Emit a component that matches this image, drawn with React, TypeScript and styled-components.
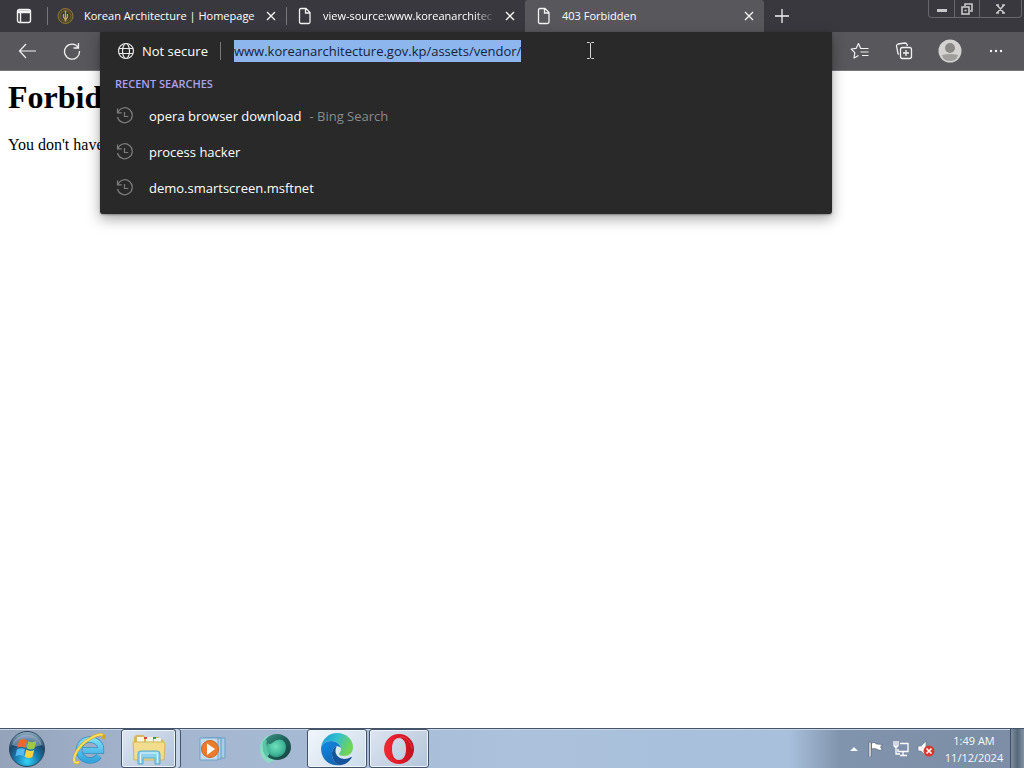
import React from "react";
import styled, { createGlobalStyle } from "styled-components";

const GlobalStyle = createGlobalStyle`
  * { box-sizing: border-box; }
  body { margin: 0; background: #fff; }
  button { border: 0; padding: 0; background: none; color: inherit; font: inherit; }
  svg { display: block; flex: none; }
`;

const Desktop = styled.div`
  min-height: 100vh;
  display: flex;
  flex-direction: column;
  font-family: "Open Sans", "Noto Sans", sans-serif;
  color: #fff;
  overflow: hidden;
`;

const TabStrip = styled.header`
  display: flex;
  height: 32px;
  background: #39383e;
`;

const StripButton = styled.button<{ $width: number }>`
  width: ${(p) => p.$width}px;
  flex: none;
  display: flex;
  align-items: center;
  justify-content: center;
`;

const Tab = styled.div<{ $active?: boolean }>`
  flex: 0 1 239px;
  min-width: 0;
  display: flex;
  align-items: center;
  gap: 8px;
  padding: 0 8px 0 9px;
  position: relative;
  background: ${(p) => (p.$active ? "#58585c" : "transparent")};
  border-radius: 3px 3px 0 0;
  &::before {
    content: "";
    position: absolute;
    left: 0;
    top: 7px;
    height: 18px;
    width: 1px;
    background: ${(p) => (p.$active ? "transparent" : "#77767b")};
  }
`;

const TabTitle = styled.span<{ $fade?: boolean }>`
  flex: 1;
  min-width: 0;
  overflow: hidden;
  white-space: nowrap;
  font-size: 11px;
  line-height: 20px;
  mask-image: ${(p) => (p.$fade ? "linear-gradient(90deg, #000 88%, transparent)" : "none")};
`;

const TabClose = styled.button`
  width: 14px;
  height: 16px;
  display: flex;
  align-items: center;
  justify-content: center;
`;

const WindowControls = styled.div`
  margin-left: auto;
  margin-right: 2px;
  display: flex;
  height: 18px;
  border: 1px solid #67666b;
  border-top: 0;
  border-radius: 0 0 4px 4px;
`;

const WindowButton = styled.button<{ $width: number }>`
  width: ${(p) => p.$width}px;
  display: flex;
  align-items: center;
  justify-content: center;
  & + & { border-left: 1px solid #67666b; }
`;

const Toolbar = styled.div`
  display: flex;
  height: 38px;
  background: #58585c;
`;

const ToolGroup = styled.div<{ $width: number }>`
  flex: none;
  width: ${(p) => p.$width}px;
  display: flex;
  align-items: center;
  justify-content: space-between;
  padding: 0 19px 0 18px;
`;

const ToolButton = styled.button`
  display: flex;
  align-items: center;
  justify-content: center;
`;

const AddressSlot = styled.div`
  flex: 1;
  min-width: 0;
  position: relative;
`;

const Popup = styled.div`
  position: absolute;
  top: 0;
  left: 0;
  right: 0;
  z-index: 2;
  padding-bottom: 8px;
  background: #292929;
  border-radius: 0 0 3px 3px;
  box-shadow: 0 5px 14px rgba(0, 0, 0, 0.35), 0 1px 2px rgba(0, 0, 0, 0.3);
`;

const AddressRow = styled.div`
  display: flex;
  align-items: center;
  height: 38px;
  padding-left: 17px;
  font-size: 13px;
`;

const Security = styled.button`
  display: flex;
  align-items: center;
  gap: 7px;
  flex: none;
  padding-right: 12px;
  border-right: 1px solid #77777a;
  line-height: 16px;
  margin-right: 13px;
`;

const UrlInput = styled.input`
  field-sizing: content;
  min-width: 0;
  height: 22px;
  border: 0;
  padding: 0;
  outline: 0;
  font: inherit;
  color: #14233c;
  background: #8eb6ee;
`;

const PointerMark = styled.div`
  position: absolute;
  top: 10px;
  left: 486px;
`;

const SectionTitle = styled.h2`
  margin: 0;
  padding: 0 15px;
  font-size: 11px;
  font-weight: 600;
  line-height: 28px;
  color: #a9a1f2;
`;

const Searches = styled.ul`
  margin: 0;
  padding: 0;
  list-style: none;
`;

const SearchLink = styled.a`
  display: flex;
  align-items: center;
  height: 36px;
  padding-left: 16px;
  color: #fff;
  text-decoration: none;
  font-size: 13px;
  white-space: pre;
`;

const SearchText = styled.span`
  margin-left: 15px;
`;

const SearchSource = styled.span`
  margin-left: 8px;
  color: #8b8b8b;
`;

const Page = styled.main`
  flex: 1;
  padding: 8px;
  border-top: 1px solid #77777a;
  color: #000;
  background: #fff;
  font-family: "Liberation Serif", serif;
  font-size: 16px;
  line-height: 18px;
  h1 {
    margin: 0 0 21px;
    font-size: 32px;
    line-height: 36px;
  }
  p { margin: 0; }
`;

const Taskbar = styled.footer`
  display: flex;
  height: 40px;
  border-top: 1px solid #46546a;
  box-shadow: inset 0 1px 0 #c9d6e6;
  background: linear-gradient(90deg, #94a3b9 0, #a3b4ce 14%, #abc1dc 50%, #a8c0dc 77%, #8194ad 82%, #7c8da5 100%);
`;

const Launchers = styled.nav`
  display: flex;
  gap: 2px;
`;

const Launcher = styled.button<{ $state?: "open" | "focused"; $stacked?: boolean }>`
  width: ${(p) => (p.$stacked ? 55 : 60)}px;
  margin-right: ${(p) => (p.$stacked ? 5 : 0)}px;
  display: flex;
  align-items: center;
  justify-content: center;
  border-radius: 3px;
  border: 1px solid ${(p) => (p.$state ? "#43536b" : "transparent")};
  box-shadow: ${(p) =>
    p.$stacked
      ? "inset 0 0 0 1px #eef4fb, 4px 0 0 #c6d3e4, 5px 0 0 #43536b"
      : p.$state
      ? "inset 0 0 0 1px #eef4fb"
      : "none"};
  background: ${(p) =>
    p.$state === "focused"
      ? "linear-gradient(135deg, #f1f6fb, #cbdbeb)"
      : p.$state === "open"
      ? "linear-gradient(135deg, #dde5f0, #b3c4da)"
      : "none"};
`;

const StartButton = styled.button`
  width: 59px;
  display: flex;
  align-items: center;
  padding-left: 7px;
`;

const Tray = styled.div`
  margin-left: auto;
  display: flex;
  align-items: center;
  gap: 8px;
`;

const Clock = styled.time`
  width: 62px;
  text-align: center;
  font-size: 11px;
  line-height: 17px;
  white-space: nowrap;
  color: #f4f8fc;
`;

const ShowDesktop = styled.button`
  width: 14px;
  height: 39px;
  margin-left: -3px;
  border-left: 1px solid #3f4d60;
  background: linear-gradient(90deg, #7f8e9f, #56677a 50%, #8494a6);
`;

const CloseGlyph = () => (
  <svg width="10" height="10" viewBox="0 0 10 10" stroke="#f2f2f2" strokeWidth="1.4">
    <path d="M1 1l8 8M9 1l-8 8" />
  </svg>
);

const PageGlyph = () => (
  <svg width="20" height="18" viewBox="0 0 20 18" fill="none" stroke="#f2f2f2" strokeWidth="1.3">
    <path d="M4.500 3q0-1.500 1.500-1.500h5l4 4v9.500q0 1.500-1.500 1.500H6q-1.500 0-1.500-1.500z M10.500 1.500v4.500h4.500" />
  </svg>
);

const EmblemGlyph = () => (
  <svg width="20" height="18" viewBox="0 0 20 18">
    <circle cx="9.500" cy="9" r="7.500" fill="#4f482c" stroke="#8d7b42" />
    <circle cx="9.500" cy="9" r="5" fill="#36362f" stroke="#6e6238" />
    <path d="M9.500 3.500v11M7.500 7v3l2 3 2-3V7" stroke="#c3aa58" strokeWidth="1.300" fill="none" />
  </svg>
);

const HistoryGlyph = () => (
  <svg width="18" height="18" viewBox="0 0 18 18" fill="none" stroke="#7c7c7c" strokeWidth="1.2">
    <path d="M1.500 1.500v4.300h4.300M1.800 5.500A7.500 7.500 0 1 1 1.500 10M8.500 5v4.500h3.800" />
  </svg>
);

const StartOrb = () => (
  <svg width="40" height="38" viewBox="0 0 40 38">
    <defs>
      <radialGradient id="orb" cx=".5" cy=".85" r=".85">
        <stop offset="0" stopColor="#35d4f6" />
        <stop offset=".4" stopColor="#1878ad" />
        <stop offset=".7" stopColor="#1c4668" />
        <stop offset="1" stopColor="#9eb9cf" />
      </radialGradient>
    </defs>
    <circle cx="20" cy="19" r="17.500" fill="url(#orb)" stroke="#29455f" />
    <path d="M5 15a15.500 14 0 0 1 30 0Q20 20 5 15" fill="#d9e8f1" opacity=".38" />
    <path d="M12 10.500q4-2.400 8 0l-1.600 7.200q-4-2-8 0z" fill="#ef672d" />
    <path d="M21.300 11.200q4 2 8-.2l-1.800 7.500q-4 2-7.800-.2z" fill="#9bcb45" />
    <path d="M10 19.300q4-2.200 8 0l-1.700 7q-4-2-7.900.2z" fill="#55b8f1" />
    <path d="M19.300 19.800q4 2.200 7.900.2l-1.800 7q-4 2-7.800-.2z" fill="#ffd23e" />
  </svg>
);

const ExplorerE = () => (
  <svg width="36" height="34" viewBox="0 0 36 34" fill="none">
    <defs>
      <linearGradient id="ieBlue" x2="0" y2="1">
        <stop stopColor="#7fdcfb" />
        <stop offset="1" stopColor="#35a5dd" />
      </linearGradient>
    </defs>
    <path d="M12 18.500h18A11 10.500 0 1 0 28 24" stroke="#2f8fc4" strokeWidth="6.500" />
    <path d="M12 18.500h18A11 10.500 0 1 0 28 24" stroke="url(#ieBlue)" strokeWidth="5" />
    <path d="M8 30Q1 33 4 23 8 13 20 6q9-5 12-3 2 1 0 4" stroke="#d6a31c" strokeWidth="3" />
    <path d="M8 30Q1 33 4 23 8 13 20 6q9-5 12-3" stroke="#ffe15c" strokeWidth="2" />
  </svg>
);

const FolderGlyph = () => (
  <svg width="36" height="32" viewBox="0 0 36 32">
    <path d="M3 4l2-2h8l1 2h13l5 3v20H3z" fill="#d7b860" />
    <path d="M6 4h7v5H6zM15 4h7v5h-7zM23 5h7v5h-7z" fill="#f8f5de" />
    <path d="M13 4h3v2h-3z" fill="#db463a" />
    <path d="M22 4h3v2h-3z" fill="#39995a" />
    <path d="M2 9h31l1 3-1 15H3z" fill="#f2dc8d" stroke="#d1b560" />
    <path d="M7 31V21q0-3 3-3h16q3 0 3 3v10h-5v-6H12v6z" fill="#8fd2ee" stroke="#5babc8" />
    <path d="M9 20h18M9.500 21v9M26.500 21v9" stroke="#dcf8ff" />
  </svg>
);

const MediaGlyph = () => (
  <svg width="30" height="30" viewBox="0 0 30 30">
    <path d="M9 4h18v20H9z" fill="#a9cde3" stroke="#6b9fc6" />
    <path d="M5 4h18v21H5z" fill="#b4d3e7" stroke="#5f9bc8" />
    <path d="M2 4h18v22H2z" fill="#c2dced" stroke="#6ba3cb" />
    <circle cx="12" cy="15" r="8.500" fill="#ea7d2b" stroke="#cf6424" />
    <path d="M9 9.500l8 5.500-8 6z" fill="#fff" />
  </svg>
);

const GreenSphere = () => (
  <svg width="34" height="34" viewBox="0 0 34 34">
    <defs>
      <radialGradient id="sphere" cx=".45" cy=".4" r=".65">
        <stop stopColor="#6fe0ba" />
        <stop offset=".7" stopColor="#3fb597" />
        <stop offset="1" stopColor="#2d8b78" />
      </radialGradient>
      <linearGradient id="shade" x2="1" y2="1">
        <stop stopColor="#3c9c88" />
        <stop offset=".5" stopColor="#1e5f58" />
        <stop offset="1" stopColor="#15413f" />
      </linearGradient>
    </defs>
    <path d="M10 3Q2 8 2 17t8 14q5-1 10-5L12 13z" fill="#8cdcc4" />
    <ellipse cx="19" cy="15" rx="14" ry="13" fill="url(#shade)" />
    <path d="M5 9Q3 18 9 26q3-4 3-8-5-4-3-10z" fill="#5bc4a5" />
    <path d="M10 11q2 2 4 0 5-5 10-3 4 2 4 7 0 8-8 10-7 1-10-5-2-5 0-9z" fill="url(#sphere)" />
  </svg>
);

const EdgeGlyph = () => (
  <svg width="34" height="34" viewBox="0 0 34 34">
    <defs>
      <linearGradient id="edgeTop" x2="1" y2=".4">
        <stop stopColor="#1493d8" />
        <stop offset=".5" stopColor="#32c0d0" />
        <stop offset="1" stopColor="#71d455" />
      </linearGradient>
      <linearGradient id="edgeLow" x2=".6" y2="1">
        <stop stopColor="#128be0" />
        <stop offset="1" stopColor="#1464b4" />
      </linearGradient>
    </defs>
    <path d="M1 16C2 7 9 1 17 1c10 0 16 7 16 14 0 6-4 9-9 9-3 0-5-1-5-2s2-2 2-5c0-4-4-8-10-8C6 9 2 12 1 16z" fill="url(#edgeTop)" />
    <path d="M1 16c1-4 5-7 10-7 5 0 9 3 10 7-1-1-3-2-4-2-3 1-5 4-5 8 0 6 4 11 10 11C10 35 1 28 1 16z" fill="url(#edgeLow)" />
    <path d="M12 22c0-4 2-7 5-8-3 4-2 12 7 13 3 0 5-1 7-2 1 0 1 0 .5 1C29 30 25 33 20 33c-5-1-8-6-8-11z" fill="#15539a" />
  </svg>
);

const OperaGlyph = () => (
  <svg width="32" height="32" viewBox="0 0 32 32">
    <defs>
      <linearGradient id="operaRed" x2="1">
        <stop stopColor="#f02b34" />
        <stop offset=".6" stopColor="#dc1725" />
        <stop offset="1" stopColor="#b81523" />
      </linearGradient>
    </defs>
    <path fillRule="evenodd" fill="url(#operaRed)" d="M16 1a15 15 0 1 0 0 30 15 15 0 1 0 0-30zm0 4c5 0 7 5 7 11s-2 11-7 11-7-5-7-11 2-11 7-11z" />
    <path d="M16 5q5-3 9 2 4 4 4 9" fill="none" stroke="#ff6265" opacity=".5" />
  </svg>
);

const searches = [
  { text: "opera browser download", source: "Bing Search" },
  { text: "process hacker" },
  { text: "demo.smartscreen.msftnet" },
];

export default function App() {
  return (
    <Desktop>
      <GlobalStyle />
      <TabStrip>
        <StripButton $width={47} aria-label="Tab actions">
          <svg width="16" height="16" viewBox="0 0 16 16" fill="none" stroke="#f2f2f2" strokeWidth="1.4">
            <rect x="1.500" y="1.500" width="13" height="13" rx="2" />
            <path d="M1.500 3h13M1.500 4.500h13M4.500 5v9" />
          </svg>
        </StripButton>
        <Tab>
          <EmblemGlyph />
          <TabTitle>Korean Architecture | Homepage</TabTitle>
          <TabClose aria-label="Close tab"><CloseGlyph /></TabClose>
        </Tab>
        <Tab>
          <PageGlyph />
          <TabTitle $fade>view-source:www.koreanarchitec</TabTitle>
          <TabClose aria-label="Close tab"><CloseGlyph /></TabClose>
        </Tab>
        <Tab $active>
          <PageGlyph />
          <TabTitle>403 Forbidden</TabTitle>
          <TabClose aria-label="Close tab"><CloseGlyph /></TabClose>
        </Tab>
        <StripButton $width={36} aria-label="New tab">
          <svg width="16" height="16" viewBox="0 0 16 16" stroke="#f2f2f2" strokeWidth="1.3">
            <path d="M8 1v14M1 8h14" />
          </svg>
        </StripButton>
        <WindowControls>
          <WindowButton $width={25} aria-label="Minimize">
            <svg width="12" height="12" viewBox="0 0 12 12"><path d="M1 6h10v3H1z" fill="#c8c8ca" /></svg>
          </WindowButton>
          <WindowButton $width={25} aria-label="Restore">
            <svg width="12" height="12" viewBox="0 0 12 12" fill="none" stroke="#c8c8ca" strokeWidth="1.600">
              <path d="M4 3V1h7v7H9" /><rect x="1" y="4" width="7" height="7" /><path d="M3.500 7.500h2" />
            </svg>
          </WindowButton>
          <WindowButton $width={42} aria-label="Close">
            <svg width="11" height="10" viewBox="0 0 11 10" stroke="#c8c8ca" strokeWidth="1.500">
              <path d="M2 1l7 8M9 1L2 9M1 1h3M7 1h3M1 9h3M7 9h3" />
            </svg>
          </WindowButton>
        </WindowControls>
      </TabStrip>

      <Toolbar>
        <ToolGroup $width={100}>
          <ToolButton aria-label="Back">
            <svg width="18" height="16" viewBox="0 0 18 16" fill="none" stroke="#f2f2f2" strokeWidth="1.200">
              <path d="M8 1L1.500 8 8 15M1.500 8H18" />
            </svg>
          </ToolButton>
          <ToolButton aria-label="Refresh">
            <svg width="18" height="18" viewBox="0 0 18 18" fill="none" stroke="#f2f2f2" strokeWidth="1.300">
              <path d="M15.500 1v5h-5M15.300 5.500A7.500 7.500 0 1 0 16.500 9" />
            </svg>
          </ToolButton>
        </ToolGroup>
        <AddressSlot>
          <Popup>
            <AddressRow>
              <Security>
                <svg width="18" height="18" viewBox="0 0 18 18" fill="none" stroke="#e8e8e8" strokeWidth="1.200">
                  <circle cx="9" cy="9" r="7.500" />
                  <ellipse cx="9" cy="9" rx="3.500" ry="7.500" />
                  <path d="M2 6.500h14M2 11.500h14" />
                </svg>
                Not secure
              </Security>
              <UrlInput aria-label="Address" defaultValue="www.koreanarchitecture.gov.kp/assets/vendor/" />
            </AddressRow>
            <PointerMark>
              <svg width="9" height="17" viewBox="0 0 9 17" fill="none" stroke="#d5d5d5">
                <path d="M1 .5h2.500l1 1 1-1H8M4.500 1v15M1 16.500h2.500l1-1 1 1H8" />
              </svg>
            </PointerMark>
            <SectionTitle>RECENT SEARCHES</SectionTitle>
            <Searches>
              {searches.map((s) => (
                <li key={s.text}>
                  <SearchLink href="#">
                    <HistoryGlyph />
                    <SearchText>{s.text}</SearchText>
                    {s.source && <SearchSource>- {s.source}</SearchSource>}
                  </SearchLink>
                </li>
              ))}
            </Searches>
          </Popup>
        </AddressSlot>
        <ToolGroup $width={192}>
          <ToolButton aria-label="Favorites">
            <svg width="20" height="18" viewBox="0 0 20 18" fill="none" stroke="#f2f2f2" strokeWidth="1.200" strokeLinejoin="round">
              <path d="M12.500 6.500h-1.800L8.500 1.500 6.200 6.300l-5 .7 3.600 3.600L4 16l4.500-2.500M11 6.500h7.500M10.500 10h8M12 13.500h6.500" />
            </svg>
          </ToolButton>
          <ToolButton aria-label="Collections">
            <svg width="18" height="18" viewBox="0 0 18 18" fill="none" stroke="#f2f2f2" strokeWidth="1.300">
              <path d="M4 12.500l-1-.8L1.500 4q0-1.500 1.500-2l7-1q1.500 0 2 1.500l.3 1.500" />
              <rect x="5.500" y="5.500" width="11" height="11" rx="2" />
              <path d="M11 8v6M8 11h6" />
            </svg>
          </ToolButton>
          <ToolButton aria-label="Profile">
            <svg width="24" height="24" viewBox="0 0 24 24">
              <circle cx="12" cy="12" r="11.500" fill="#d4d3d1" />
              <circle cx="12" cy="9" r="5" fill="#8b8986" />
              <path d="M4 16q8-2 16 0-1 6-8 6t-8-6z" fill="#a19f9c" />
            </svg>
          </ToolButton>
          <ToolButton aria-label="Settings and more">
            <svg width="18" height="4" viewBox="0 0 18 4" fill="#f2f2f2">
              <circle cx="4" cy="2" r="1.200" /><circle cx="9" cy="2" r="1.200" /><circle cx="14" cy="2" r="1.200" />
            </svg>
          </ToolButton>
        </ToolGroup>
      </Toolbar>

      <Page>
        <h1>Forbidden</h1>
        <p>You don't have</p>
      </Page>

      <Taskbar>
        <StartButton aria-label="Start"><StartOrb /></StartButton>
        <Launchers>
          <Launcher aria-label="Internet Explorer"><ExplorerE /></Launcher>
          <Launcher $state="open" $stacked aria-label="File Explorer"><FolderGlyph /></Launcher>
          <Launcher aria-label="Media Player"><MediaGlyph /></Launcher>
          <Launcher aria-label="Sphere"><GreenSphere /></Launcher>
          <Launcher $state="focused" aria-label="Edge"><EdgeGlyph /></Launcher>
          <Launcher $state="open" aria-label="Opera"><OperaGlyph /></Launcher>
        </Launchers>
        <Tray>
          <svg width="10" height="8" viewBox="0 0 10 8"><path d="M1 6l4-4 4 4z" fill="#f4f8fc" /></svg>
          <svg width="18" height="16" viewBox="0 0 18 16" fill="#fff" stroke="#42536a" strokeWidth=".6">
            <path d="M2 1h2v15H2zM4.500 2q3-1.500 5 1l6 .5-2 2.500 2 3q-4 1-6-1-2-1-5 0z" />
          </svg>
          <svg width="16" height="16" viewBox="0 0 16 16" fill="none" stroke="#fff" strokeWidth="1.300">
            <path d="M1 0v4q0 2 2 2t2-2V0M3 0v13h4M7 2.500h8v8H5V8M10 11v3M7 14.500h7" />
          </svg>
          <svg width="18" height="18" viewBox="0 0 18 18">
            <path d="M1 6h3l5-5v15l-5-5H1z" fill="#fff" stroke="#5c6b80" strokeWidth=".6" />
            <circle cx="12" cy="11" r="5.500" fill="#d8382f" />
            <path d="M9.500 8.500l5 5M14.500 8.500l-5 5" stroke="#fff" strokeWidth="1.600" />
          </svg>
          <Clock>1:49 AM<br />11/12/2024</Clock>
          <ShowDesktop aria-label="Show desktop" />
        </Tray>
      </Taskbar>
    </Desktop>
  );
}
